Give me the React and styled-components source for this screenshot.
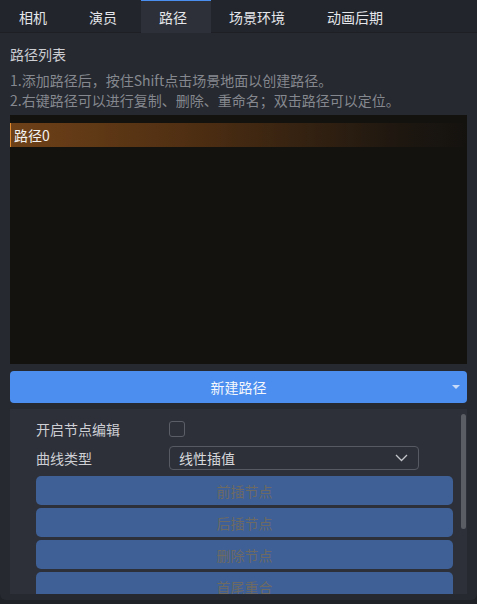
import React from 'react'
import styled, { createGlobalStyle } from 'styled-components'

const GlobalStyle = createGlobalStyle`
  html, body {
    margin: 0;
    padding: 0;
    background: #1f2227;
  }
  body {
    font-family: "Noto Sans CJK SC", "Noto Sans", sans-serif;
    font-size: 14px;
  }
  * { box-sizing: border-box; }
`

const tabs = ['相机', '演员', '路径', '场景环境', '动画后期']
const nodeButtons = ['前插节点', '后插节点', '删除节点', '首尾重合']

const Panel = styled.div`
  width: 477px;
  height: 600px;
  background: #262930;
  border-radius: 0 0 6px 6px;
  overflow: hidden;
  display: flex;
  flex-direction: column;
`

const TabBar = styled.div`
  height: 33px;
  flex-shrink: 0;
  display: flex;
  padding-left: 1px;
  background: #22252c;
  border-bottom: 1px solid #1d1f24;
`

const Tab = styled.div`
  height: 33px;
  padding: 0 24px 0 18px;
  display: flex;
  align-items: center;
  color: #e4e6ea;
  font-size: 14px;
  background: ${({ active }) => (active ? '#2d3038' : 'transparent')};
  border-top: 1px solid ${({ active }) => (active ? '#4a8ff0' : 'transparent')};
  cursor: pointer;
`

const Content = styled.div`
  flex: 1;
  display: flex;
  flex-direction: column;
  padding: 11px 10px 0 10px;
  min-height: 0;
`

const Title = styled.div`
  color: #cbcdd2;
  line-height: 20px;
  height: 20px;
  margin-bottom: 6px;
`

const Hint = styled.div`
  color: #85888e;
  line-height: 20px;
  white-space: nowrap;
`

const PathList = styled.div`
  margin-top: 5px;
  height: 249px;
  flex-shrink: 0;
  background: #14120f;
  padding-top: 8px;
`

const PathItem = styled.div`
  height: 24px;
  display: flex;
  align-items: center;
  padding-left: 3px;
  color: #f2f2f2;
  border-left: 1px solid #e08a30;
  background: linear-gradient(90deg, #6e4118 0%, #4e2e12 40%, #1e1710 85%, #14120f 100%);
`

const NewButton = styled.button`
  margin-top: 7px;
  height: 32px;
  flex-shrink: 0;
  border: none;
  border-radius: 4px;
  background: #4b8ef0;
  color: #f4f7fc;
  font-family: inherit;
  font-size: 14px;
  position: relative;
  cursor: pointer;
`

const Caret = styled.span`
  position: absolute;
  right: 7px;
  top: 14px;
  width: 0;
  height: 0;
  border-left: 4px solid transparent;
  border-right: 4px solid transparent;
  border-top: 4px solid #c7dbf8;
`

const Settings = styled.div`
  margin-top: 6px;
  height: 185px;
  flex-shrink: 0;
  background: #2d3039;
  position: relative;
  overflow: hidden;
  padding: 10px 14px 0 26px;
  display: flex;
  flex-direction: column;
`

const Row = styled.div`
  display: flex;
  align-items: center;
  height: ${({ h }) => h}px;
  margin-bottom: ${({ mb }) => mb || 0}px;
  flex-shrink: 0;
`

const Label = styled.div`
  width: 133px;
  color: #cdcfd4;
  line-height: 20px;
`

const Checkbox = styled.div`
  width: 16px;
  height: 16px;
  border: 1px solid #5b5e66;
  border-radius: 3px;
`

const Select = styled.div`
  width: 250px;
  height: 24px;
  border: 1px solid #575a62;
  border-radius: 4px;
  display: flex;
  align-items: center;
  justify-content: space-between;
  padding: 0 10px 0 9px;
  color: #d6d8dc;
`

const NodeButton = styled.button`
  height: 29px;
  flex-shrink: 0;
  margin-top: 3px;
  border: none;
  border-radius: 5px;
  background: #3e6096;
  color: #6d6a63;
  font-family: inherit;
  font-size: 14px;
`

const ScrollThumb = styled.div`
  position: absolute;
  right: 1px;
  top: 5px;
  width: 5px;
  height: 115px;
  border-radius: 3px;
  background: #5a5d63;
`

const Chevron = () => (
  <svg width="13" height="8" viewBox="0 0 13 8">
    <path d="M1 1 L6.5 6.5 L12 1" fill="none" stroke="#c4c6cb" strokeWidth="1.3" />
  </svg>
)

export default function App() {
  return (
    <>
      <GlobalStyle />
      <Panel>
        <TabBar>
          {tabs.map((t) => (
            <Tab key={t} active={t === '路径'}>{t}</Tab>
          ))}
        </TabBar>
        <Content>
          <Title>路径列表</Title>
          <Hint>1.添加路径后，按住Shift点击场景地面以创建路径。</Hint>
          <Hint>2.右键路径可以进行复制、删除、重命名；双击路径可以定位。</Hint>
          <PathList>
            <PathItem>路径0</PathItem>
          </PathList>
          <NewButton>
            新建路径
            <Caret />
          </NewButton>
          <Settings>
            <Row h={20} mb={7}>
              <Label>开启节点编辑</Label>
              <Checkbox />
            </Row>
            <Row h={24} mb={3}>
              <Label>曲线类型</Label>
              <Select>
                <span>线性插值</span>
                <Chevron />
              </Select>
            </Row>
            {nodeButtons.map((b) => (
              <NodeButton key={b}>{b}</NodeButton>
            ))}
            <ScrollThumb />
          </Settings>
        </Content>
      </Panel>
    </>
  )
}
